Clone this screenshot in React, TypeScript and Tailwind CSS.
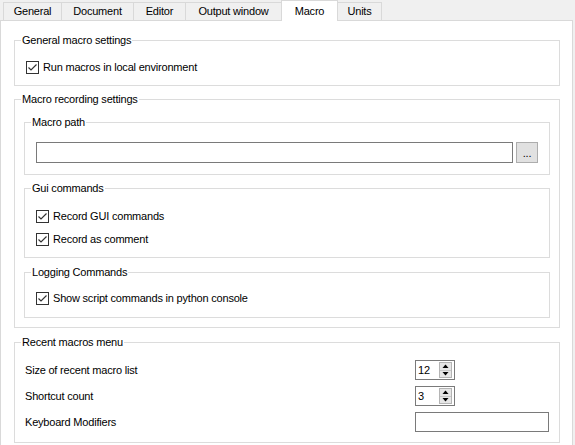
import type { ReactNode } from "react";

const tabs = [
  { label: "General", width: "w-[59px]" },
  { label: "Document", width: "w-[73px]" },
  { label: "Editor", width: "w-[53px]" },
  { label: "Output window", width: "w-[97px]" },
  { label: "Macro", width: "w-[57px]", active: true },
  { label: "Units", width: "w-[45px]" },
];

function GroupBox({ title, className, children }: { title: string; className: string; children?: ReactNode }) {
  return (
    <div className={`relative border border-[#dcdcdc] ${className}`}>
      <span className="absolute -top-[8px] left-[6px] bg-white px-[1px] leading-[15px] whitespace-nowrap">
        {title}
      </span>
      {children}
    </div>
  );
}

function CheckBox({ label }: { label: string }) {
  return (
    <div className="flex h-[13px] items-center gap-[4px]">
      <span className="flex h-[13px] w-[13px] shrink-0 items-center justify-center border border-[#333333] bg-white">
        <svg width="11" height="11" viewBox="0 0 11 11">
          <path d="M1.5 5.5 L4 8 L9.5 2.5" fill="none" stroke="#333333" strokeWidth="1.2" />
        </svg>
      </span>
      <span className="leading-[15px] whitespace-nowrap">{label}</span>
    </div>
  );
}

function SpinBox({ value }: { value: string }) {
  return (
    <div className="flex h-[20px] w-[40px] items-center border border-[#7a7a7a] bg-white pl-[2px] pr-[2px]">
      <span className="flex-1 leading-[15px]">{value}</span>
      <div className="flex h-[16px] w-[13px] flex-col border border-[#b4b4b4] bg-[#e6e6e6]">
        <div className="flex flex-1 items-center justify-center border-b border-[#c8c8c8]">
          <svg width="7" height="4" viewBox="0 0 7 4">
            <path d="M0.5 4 L3.5 0.5 L6.5 4 Z" fill="#000" />
          </svg>
        </div>
        <div className="flex flex-1 items-center justify-center">
          <svg width="7" height="4" viewBox="0 0 7 4">
            <path d="M0.5 0 L3.5 3.5 L6.5 0 Z" fill="#000" />
          </svg>
        </div>
      </div>
    </div>
  );
}

export default function App() {
  return (
    <div className="h-[445px] w-[575px] overflow-hidden bg-[#f0f0f0] font-['Liberation_Sans',Arial,sans-serif] text-[11px] tracking-[-0.2px] text-black">
      <div className="flex h-[20px] items-end pl-[3px]">
        {tabs.map((t, i) => (
          <div
            key={t.label}
            className={`flex items-center justify-center border border-b-0 border-[#d9d9d9] leading-[15px] ${t.width} ${
              i > 0 ? "-ml-px" : ""
            } ${t.active ? "relative z-10 -mb-px h-[21px] bg-white" : "h-[18px] bg-[#f0f0f0]"}`}
          >
            {t.label}
          </div>
        ))}
      </div>

      <div className="h-[430px] w-[573px] border border-[#d9d9d9] bg-white pl-[13px] pr-[12px] pt-[19px]">
        <GroupBox title="General macro settings" className="h-[46px] pl-[11px] pt-[20px]">
          <CheckBox label="Run macros in local environment" />
        </GroupBox>

        <GroupBox title="Macro recording settings" className="mt-[13px] h-[229px] px-[9px] pt-[22px]">
          <GroupBox title="Macro path" className="flex h-[53px] gap-[3px] px-[11px] pt-[19px]">
            <div className="h-[21px] flex-1 border border-[#7a7a7a] bg-white" />
            <div className="flex h-[21px] w-[22px] items-end justify-center border border-[#adadad] bg-[#e1e1e1] pb-[3px] text-[11px] leading-[11px]">
              ...
            </div>
          </GroupBox>

          <GroupBox title="Gui commands" className="mt-[13px] flex h-[70px] flex-col gap-[10px] pl-[11px] pt-[21px]">
            <CheckBox label="Record GUI commands" />
            <CheckBox label="Record as comment" />
          </GroupBox>

          <GroupBox title="Logging Commands" className="mt-[14px] h-[46px] pl-[11px] pt-[19px]">
            <CheckBox label="Show script commands in python console" />
          </GroupBox>
        </GroupBox>

        <GroupBox title="Recent macros menu" className="mt-[14px] flex h-[101px] flex-col gap-[6px] pl-[10px] pr-[10px] pt-[17px]">
          <div className="flex h-[20px] items-center">
            <span className="w-[390px] leading-[15px]">Size of recent macro list</span>
            <SpinBox value="12" />
          </div>
          <div className="flex h-[20px] items-center">
            <span className="w-[390px] leading-[15px]">Shortcut count</span>
            <SpinBox value="3" />
          </div>
          <div className="flex h-[20px] items-center">
            <span className="w-[390px] leading-[15px]">Keyboard Modifiers</span>
            <div className="h-[20px] w-[134px] border border-[#7a7a7a] bg-white" />
          </div>
        </GroupBox>
      </div>
    </div>
  );
}
